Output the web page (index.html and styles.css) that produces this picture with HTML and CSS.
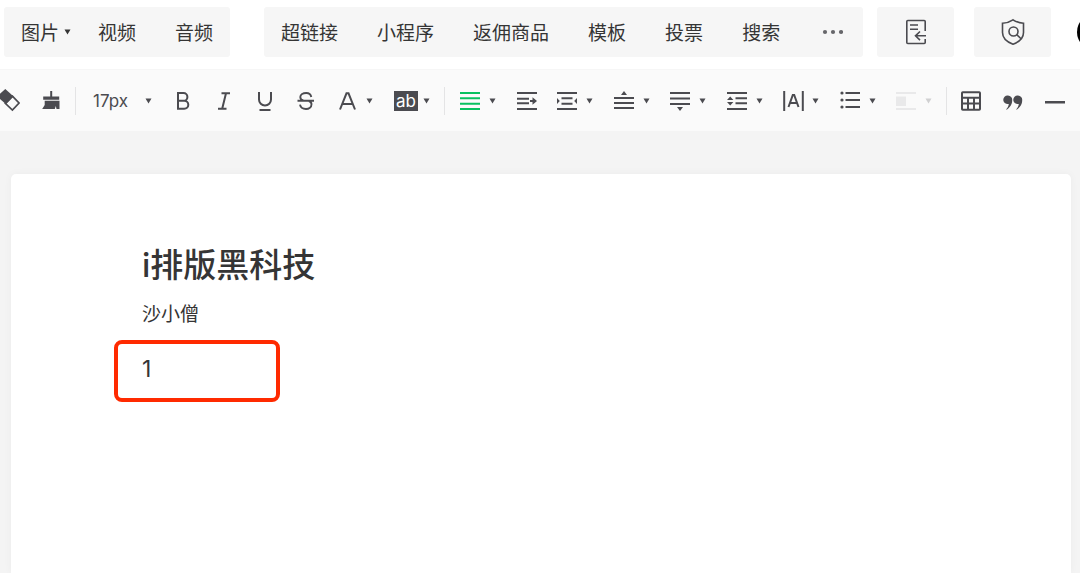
FILE: index.html
```html
<!DOCTYPE html>
<html lang="zh-CN">
<head>
    <meta charset="UTF-8">
    <meta name="viewport" content="width=device-width, initial-scale=1.0">
    <title>i排版黑科技</title>
    <link rel="stylesheet" href="styles.css">
</head>
<body>
    <svg class="sprite" aria-hidden="true">
        <symbol id="caret" viewBox="0 0 7 6"><path d="M0.5 0.5h6L3.5 5.5z" fill="currentColor"/></symbol>
    </svg>

    <header class="insert-bar">
        <div class="insert-group">
            <button class="insert-btn has-caret">图片<svg class="caret"><use href="#caret"/></svg></button>
            <button class="insert-btn">视频</button>
            <button class="insert-btn">音频</button>
        </div>
        <div class="insert-group insert-more">
            <button class="insert-btn">超链接</button>
            <button class="insert-btn">小程序</button>
            <button class="insert-btn">返佣商品</button>
            <button class="insert-btn">模板</button>
            <button class="insert-btn">投票</button>
            <button class="insert-btn">搜索</button>
            <button class="insert-btn" aria-label="更多">
                <svg width="24" height="20" viewBox="0 0 24 20" fill="#66666a"><circle cx="6" cy="10" r="2.1"/><circle cx="14" cy="10" r="2.1"/><circle cx="22" cy="10" r="2.1"/></svg>
            </button>
        </div>
        <button class="square-btn" aria-label="导入文章">
            <svg width="22" height="28" viewBox="0 0 22 28" fill="none" stroke="currentColor" stroke-width="1.6">
                <path d="M20.2 13V3.5a1 1 0 0 0-1-1H2.8a1 1 0 0 0-1 1v21a1 1 0 0 0 1 1h16.4a1 1 0 0 0 1-1V21M5 7h8M5 11.3h8M21 17.8H10.5M15 13.5l-4.5 4.3 4.5 4.3"/>
            </svg>
        </button>
        <button class="square-btn" aria-label="原创校验">
            <svg width="26" height="28" viewBox="0 0 26 28" fill="none" stroke="currentColor" stroke-width="1.6">
                <path d="M13 1.8c3 2 6.6 3.200 10.500 3.500v9.200c0 5.200-4 9.300-10.500 11.700C6.500 23.800 2.500 19.700 2.500 14.500V5.300C6.400 5 10 3.800 13 1.800z"/>
                <circle cx="13.500" cy="13.500" r="4.500"/><path d="M16.700 16.700l4.600 4.300"/>
            </svg>
        </button>
        <span class="avatar"></span>
    </header>

    <div class="format-bar">
        <div class="tools">
            <button class="tool" aria-label="清除格式">
                <svg width="20" height="24" viewBox="0 0 20 24"><path d="M5.300 0L13.600 7.500 6 15.300-3 7.500z" fill="currentColor"/><path d="M12.400 7.200l6.600 6.800-6.600 7L5.300 14.300z" fill="none" stroke="currentColor" stroke-width="1.700"/></svg>
            </button>
            <button class="tool" aria-label="格式刷">
                <svg width="20" height="20" viewBox="0 0 20 20" fill="currentColor"><path d="M9.200 0h2v5.500h7v3.200h-16V5.500h7zM3.700 9.700h14.800V18h-3l-.7-3-1 3H1.200l2.500-4z"/></svg>
            </button>
        </div>
        <span class="divider"></span>
        <div class="tools text-tools">
            <label class="size-picker">
                <select aria-label="字号"><option>17px</option></select>
                <svg class="caret"><use href="#caret"/></svg>
            </label>
            <button class="tool" aria-label="加粗">
                <svg width="20" height="20" viewBox="0 0 20 20" fill="none" stroke="currentColor" stroke-width="2"><path d="M5 2h5.500a3.900 3.900 0 0 1 0 7.800H5zM5 9.800h6.300a4 4 0 0 1 0 8H5z"/></svg>
            </button>
            <button class="tool" aria-label="斜体">
                <svg width="20" height="20" viewBox="0 0 20 20" fill="none" stroke="currentColor" stroke-width="2"><path d="M7.500 2.200H16M4 17.800h8.500M12 2.200L8.200 17.800"/></svg>
            </button>
            <button class="tool" aria-label="下划线">
                <svg width="20" height="20" viewBox="0 0 20 20" fill="none" stroke="currentColor" stroke-width="2"><path d="M4 1v7.500a6 6 0 0 0 12 0V1M4.500 19h11"/></svg>
            </button>
            <button class="tool" aria-label="删除线">
                <svg width="20" height="20" viewBox="0 0 20 20" fill="none" stroke="currentColor" stroke-width="1.900"><path d="M15.300 6c-.5-2.500-2.500-4-5-4C7 2 4.300 3.500 4.300 6c0 1.800 1.100 3 3 3.500M1.500 9.700H18M13 10c1.700.7 2.500 1.700 2.500 3.300 0 2.800-2.500 4.700-5.500 4.700-3.200 0-5.500-1.500-6-4.300"/></svg>
            </button>
            <button class="tool dropdown" aria-label="字体颜色">
                <svg width="20" height="20" viewBox="0 0 20 20" fill="none" stroke="currentColor" stroke-width="2"><path d="M3 18.500L9.500 2.300h2L18 18.500M5.800 13h9.500"/></svg>
                <svg class="caret"><use href="#caret"/></svg>
            </button>
            <button class="tool dropdown" aria-label="背景色">
                <span class="highlight">ab</span>
                <svg class="caret"><use href="#caret"/></svg>
            </button>
        </div>
        <span class="divider"></span>
        <div class="tools layout-tools">
            <button class="tool dropdown" aria-label="两端对齐">
                <svg class="active" width="20" height="20" viewBox="0 0 20 20" stroke="currentColor" stroke-width="2"><path d="M0 2h20M0 7.300h20M0 12.700h20M0 18h20"/></svg>
                <svg class="caret"><use href="#caret"/></svg>
            </button>
            <button class="tool" aria-label="首行缩进">
                <svg width="20" height="20" viewBox="0 0 20 20" stroke="currentColor" stroke-width="2"><path d="M0 2h20M0 7.800h12M0 12.200h12M0 18h20M13 10h4"/><path d="M15.500 6.300v7.400L20 10z" fill="currentColor" stroke="none"/></svg>
            </button>
            <button class="tool dropdown" aria-label="两端缩进">
                <svg width="20" height="20" viewBox="0 0 20 20" stroke="currentColor" stroke-width="2"><path d="M0 2h20M4.500 7.300h11M4.500 12.700h11M0 18h20"/><path d="M0 7l2.800 3L0 13zM20 7l-2.800 3 2.800 3z" fill="currentColor" stroke="none"/></svg>
                <svg class="caret"><use href="#caret"/></svg>
            </button>
            <button class="tool dropdown" aria-label="段前距">
                <svg width="20" height="20" viewBox="0 0 20 20" stroke="currentColor" stroke-width="2"><path d="M0 7h20M0 12h20M0 17h20"/><path d="M7 4L10 0l3 4z" fill="currentColor" stroke="none"/></svg>
                <svg class="caret"><use href="#caret"/></svg>
            </button>
            <button class="tool dropdown" aria-label="段后距">
                <svg width="20" height="20" viewBox="0 0 20 20" stroke="currentColor" stroke-width="2"><path d="M0 2h20M0 7.500h20M0 13h20"/><path d="M7 16l3 4 3-4z" fill="currentColor" stroke="none"/></svg>
                <svg class="caret"><use href="#caret"/></svg>
            </button>
            <button class="tool dropdown" aria-label="行间距">
                <svg width="20" height="20" viewBox="0 0 20 20" stroke="currentColor" stroke-width="2"><path d="M0 2h20M8.500 7.300H20M8.500 12.300H20M0 18h20"/><path d="M0 9l3.200-3.500L6.400 9zM0 11l3.200 3.500L6.400 11z" fill="currentColor" stroke="none"/></svg>
                <svg class="caret"><use href="#caret"/></svg>
            </button>
            <button class="tool dropdown" aria-label="字间距">
                <svg width="21" height="20" viewBox="0 0 21 20" fill="none" stroke="currentColor" stroke-width="2"><path d="M1.200 0v20M19.800 0v20M5.500 16l4.300-12h1.400l4.300 12M7 12h7"/></svg>
                <svg class="caret"><use href="#caret"/></svg>
            </button>
            <button class="tool dropdown" aria-label="列表">
                <svg width="20" height="20" viewBox="0 0 20 20" stroke="currentColor" stroke-width="2"><path d="M5.500 2H20M5.500 9H20M5.500 16H20"/><g fill="currentColor" stroke="none"><circle cx="2" cy="2" r="1.600"/><circle cx="2" cy="9" r="1.600"/><circle cx="2" cy="16" r="1.600"/></g></svg>
                <svg class="caret"><use href="#caret"/></svg>
            </button>
            <button class="tool dropdown" aria-label="图片浮动" disabled>
                <svg width="20" height="20" viewBox="0 0 20 20" fill="#e9e9ea"><path d="M0 1h20v2H0zM0 5.500h10v9.500H0zM0 17h20v2H0z"/></svg>
                <svg class="caret"><use href="#caret"/></svg>
            </button>
        </div>
        <span class="divider"></span>
        <div class="tools block-tools">
            <button class="tool" aria-label="表格">
                <svg width="20" height="20" viewBox="0 0 20 20" fill="none" stroke="currentColor" stroke-width="2"><rect x="1" y="1.200" width="18" height="17.600" rx="0.800"/><path d="M1 6.700h18M1 12.500h18M7 6.700V19M13 6.700V19"/></svg>
            </button>
            <button class="tool" aria-label="引用">
                <svg width="20" height="20" viewBox="0 0 20 20" fill="currentColor"><path d="M5 4.500a4.300 4.300 0 0 1 4.200 4.800c0 4.200-2.400 7.400-5.200 9.200H3c1.700-1.800 2.500-3.500 2.800-5.600A4.300 4.300 0 1 1 5 4.500zM15 4.500a4.300 4.300 0 0 1 4.200 4.800c0 4.200-2.400 7.400-5.200 9.200h-1c1.700-1.800 2.500-3.500 2.800-5.600A4.300 4.300 0 1 1 15 4.500z"/></svg>
            </button>
            <button class="tool" aria-label="分隔线">
                <svg width="20" height="20" viewBox="0 0 20 20" fill="currentColor"><path d="M0 10h20v2.500H0z"/></svg>
            </button>
        </div>
    </div>

    <main class="paper">
        <input class="title" type="text" value="i排版黑科技" aria-label="标题">
        <input class="author" type="text" value="沙小僧" aria-label="作者">
        <div class="marked">
            <textarea class="content" rows="1" aria-label="正文">1</textarea>
        </div>
    </main>
</body>
</html>
```

FILE: styles.css
```css
* {
    box-sizing: border-box;
}
body {
    display: flex;
    flex-direction: column;
    min-height: 100vh;
    margin: 0;
    overflow: hidden;
    background-color: #f4f4f4;
    color: #353535;
    font-family: Inter, "Noto Sans CJK SC", sans-serif;
    font-size: 19px;
}
button, input, select, textarea {
    margin: 0;
    padding: 0;
    border: none;
    outline: none;
    background: none;
    color: inherit;
    font: inherit;
}
button {
    cursor: pointer;
}
svg {
    display: block;
    flex: none;
}
.sprite {
    position: absolute;
    width: 0;
    height: 0;
}
.caret {
    width: 7px;
    height: 6px;
}

/* insert bar */
.insert-bar {
    display: flex;
    align-items: center;
    height: 69px;
    padding: 0 0 6px 4px;
    overflow: hidden;
    background-color: #fff;
}
.insert-group {
    display: flex;
    flex: none;
    align-items: center;
    gap: 39px;
    height: 50px;
    padding: 0 17px;
    border-radius: 3px;
    background-color: #f6f6f6;
}
.insert-more {
    margin: 0 14px 0 34px;
    padding-right: 20px;
}
.insert-btn {
    white-space: nowrap;
}
.has-caret {
    display: flex;
    align-items: center;
    gap: 5px;
    margin-right: -12px;
}
.square-btn {
    display: flex;
    flex: none;
    align-items: center;
    justify-content: center;
    width: 77px;
    height: 50px;
    margin-right: 20px;
    border-radius: 3px;
    background-color: #f6f6f6;
    color: #4b4b50;
}
.avatar {
    flex: none;
    width: 36px;
    height: 36px;
    margin-left: 6px;
    border-radius: 50%;
    background-color: #000;
}

/* format bar */
.format-bar {
    display: flex;
    align-items: center;
    height: 62px;
    padding-right: 15px;
    border-top: 1px solid #f6f6f6;
    background-color: #fafafa;
    color: #4b4b50;
}
.tools {
    display: flex;
    flex: none;
    align-items: center;
    gap: 21px;
}
.layout-tools {
    flex: 1;
    gap: 0;
    justify-content: space-between;
    padding-left: 1px;
}
.block-tools {
    gap: 22px;
}
.text-tools {
    padding-left: 3px;
}
.divider {
    flex: none;
    width: 1px;
    height: 28px;
    margin: 0 14px;
    background-color: #e4e4e5;
}
.tool {
    display: flex;
    align-items: center;
    justify-content: center;
}
.dropdown {
    justify-content: space-between;
    width: 36px;
}
.active {
    color: #07c160;
}
.tool:disabled {
    color: #d0d0d1;
}
.highlight {
    width: 24px;
    height: 20px;
    background-color: #4b4b50;
    color: #fff;
    font-size: 17px;
    line-height: 20px;
    text-align: center;
}
.size-picker {
    display: flex;
    align-items: center;
    width: 59px;
}
.size-picker select {
    flex: 1;
    min-width: 0;
    appearance: none;
    font-size: 17px;
}

/* article */
.paper {
    display: flex;
    flex: 1;
    flex-direction: column;
    margin: 43px 9px 0 11px;
    padding: 64px 131px 0;
    border-radius: 5px 5px 0 0;
    background-color: #fff;
    box-shadow: 0 0 8px rgba(0, 0, 0, 0.04);
}
.title {
    height: 50px;
    font-size: 33px;
    font-weight: 500;
}
.author {
    height: 30px;
    margin-top: 9px;
}
.marked {
    width: 166px;
    height: 62px;
    margin: 13px 0 0 -28px;
    padding: 10px 24px;
    border: 4px solid #ff2a00;
    border-radius: 8px;
}
.content {
    display: block;
    width: 100%;
    height: 30px;
    overflow: hidden;
    resize: none;
    font-size: 23px;
    line-height: 30px;
}
```
